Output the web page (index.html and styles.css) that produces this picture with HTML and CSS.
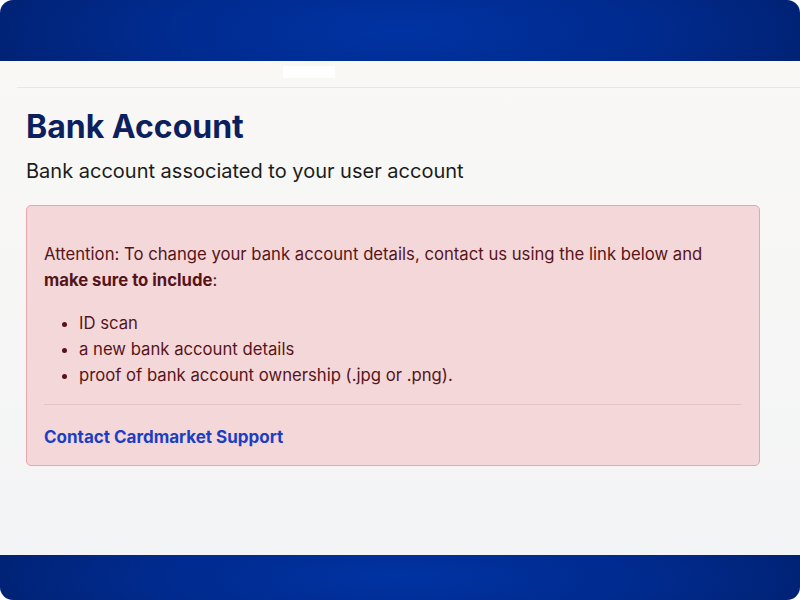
FILE: index.html
```html
<!DOCTYPE html>
<html lang="en">
<head>
    <meta charset="UTF-8">
    <meta name="viewport" content="width=device-width, initial-scale=1.0">
    <title>Bank Account</title>
    <link rel="stylesheet" href="styles.css">
</head>
<body>
    <div class="frame">
        <div class="bar bar-top"></div>
        <div class="page">
            <div class="page-head">
                <div class="nav-stub"></div>
            </div>
            <div class="content">
                <h1 class="title">Bank Account</h1>
                <p class="subtitle">Bank account associated to your user account</p>
                <div class="alert">
                    <p class="alert-text">Attention: To change your bank account details, contact us using the link below and <strong>make sure to include</strong>:</p>
                    <ul class="alert-list">
                        <li>ID scan</li>
                        <li>a new bank account details</li>
                        <li>proof of bank account ownership (.jpg or .png).</li>
                    </ul>
                    <hr class="alert-rule">
                    <a class="alert-link" href="#">Contact Cardmarket Support</a>
                </div>
            </div>
        </div>
        <div class="bar bar-bottom"></div>
    </div>
</body>
</html>
```

FILE: styles.css
```css
html, body {
    margin: 0;
    padding: 0;
    background: #ffffff;
}
.frame {
    width: 800px;
    height: 600px;
    display: flex;
    flex-direction: column;
    font-family: Inter, "Noto Sans", sans-serif;
    overflow: hidden;
}
.bar {
    background: radial-gradient(ellipse 60% 200% at 50% 50%, #0033a3 0%, #002a8c 55%, #001f6b 100%);
}
.bar-top {
    height: 61px;
    border-radius: 13px 13px 0 0;
}
.bar-bottom {
    height: 45px;
    border-radius: 0 0 13px 13px;
}
.page {
    flex: 1;
    background: linear-gradient(#f9f8f5, #f3f4f6);
}
.page-head {
    height: 27px;
    margin-left: 17px;
    border-bottom: 1px solid #e8e7e4;
    padding-top: 5px;
    box-sizing: border-box;
}
.nav-stub {
    width: 52px;
    height: 12px;
    margin-left: 266px;
    background: #ffffff;
}
.content {
    padding: 0 40px 0 26px;
}
.title {
    margin: 19px 0 0;
    font-size: 32px;
    line-height: 40px;
    font-weight: 700;
    color: #0c1f5e;
}
.subtitle {
    margin: 10px 0 0;
    font-size: 20px;
    line-height: 28px;
    color: #1c1c1c;
}
.alert {
    margin-top: 20px;
    background: #f4d7d9;
    border: 1px solid #e6a6ac;
    border-radius: 5px;
    padding: 35px 17px 15px;
    color: #561419;
    font-size: 16.7px;
    line-height: 26px;
}
.alert-text {
    margin: 0;
}
.alert-text strong {
    font-weight: 700;
}
.alert-list {
    margin: 17px 0 0;
    padding-left: 35px;
}
.alert-rule {
    margin: 16px 0 19px;
    border: 0;
    border-top: 1px solid #e8c3c6;
}
.alert-link {
    color: #1a3fc4;
    font-weight: 700;
    font-size: 17px;
    text-decoration: none;
}
```
